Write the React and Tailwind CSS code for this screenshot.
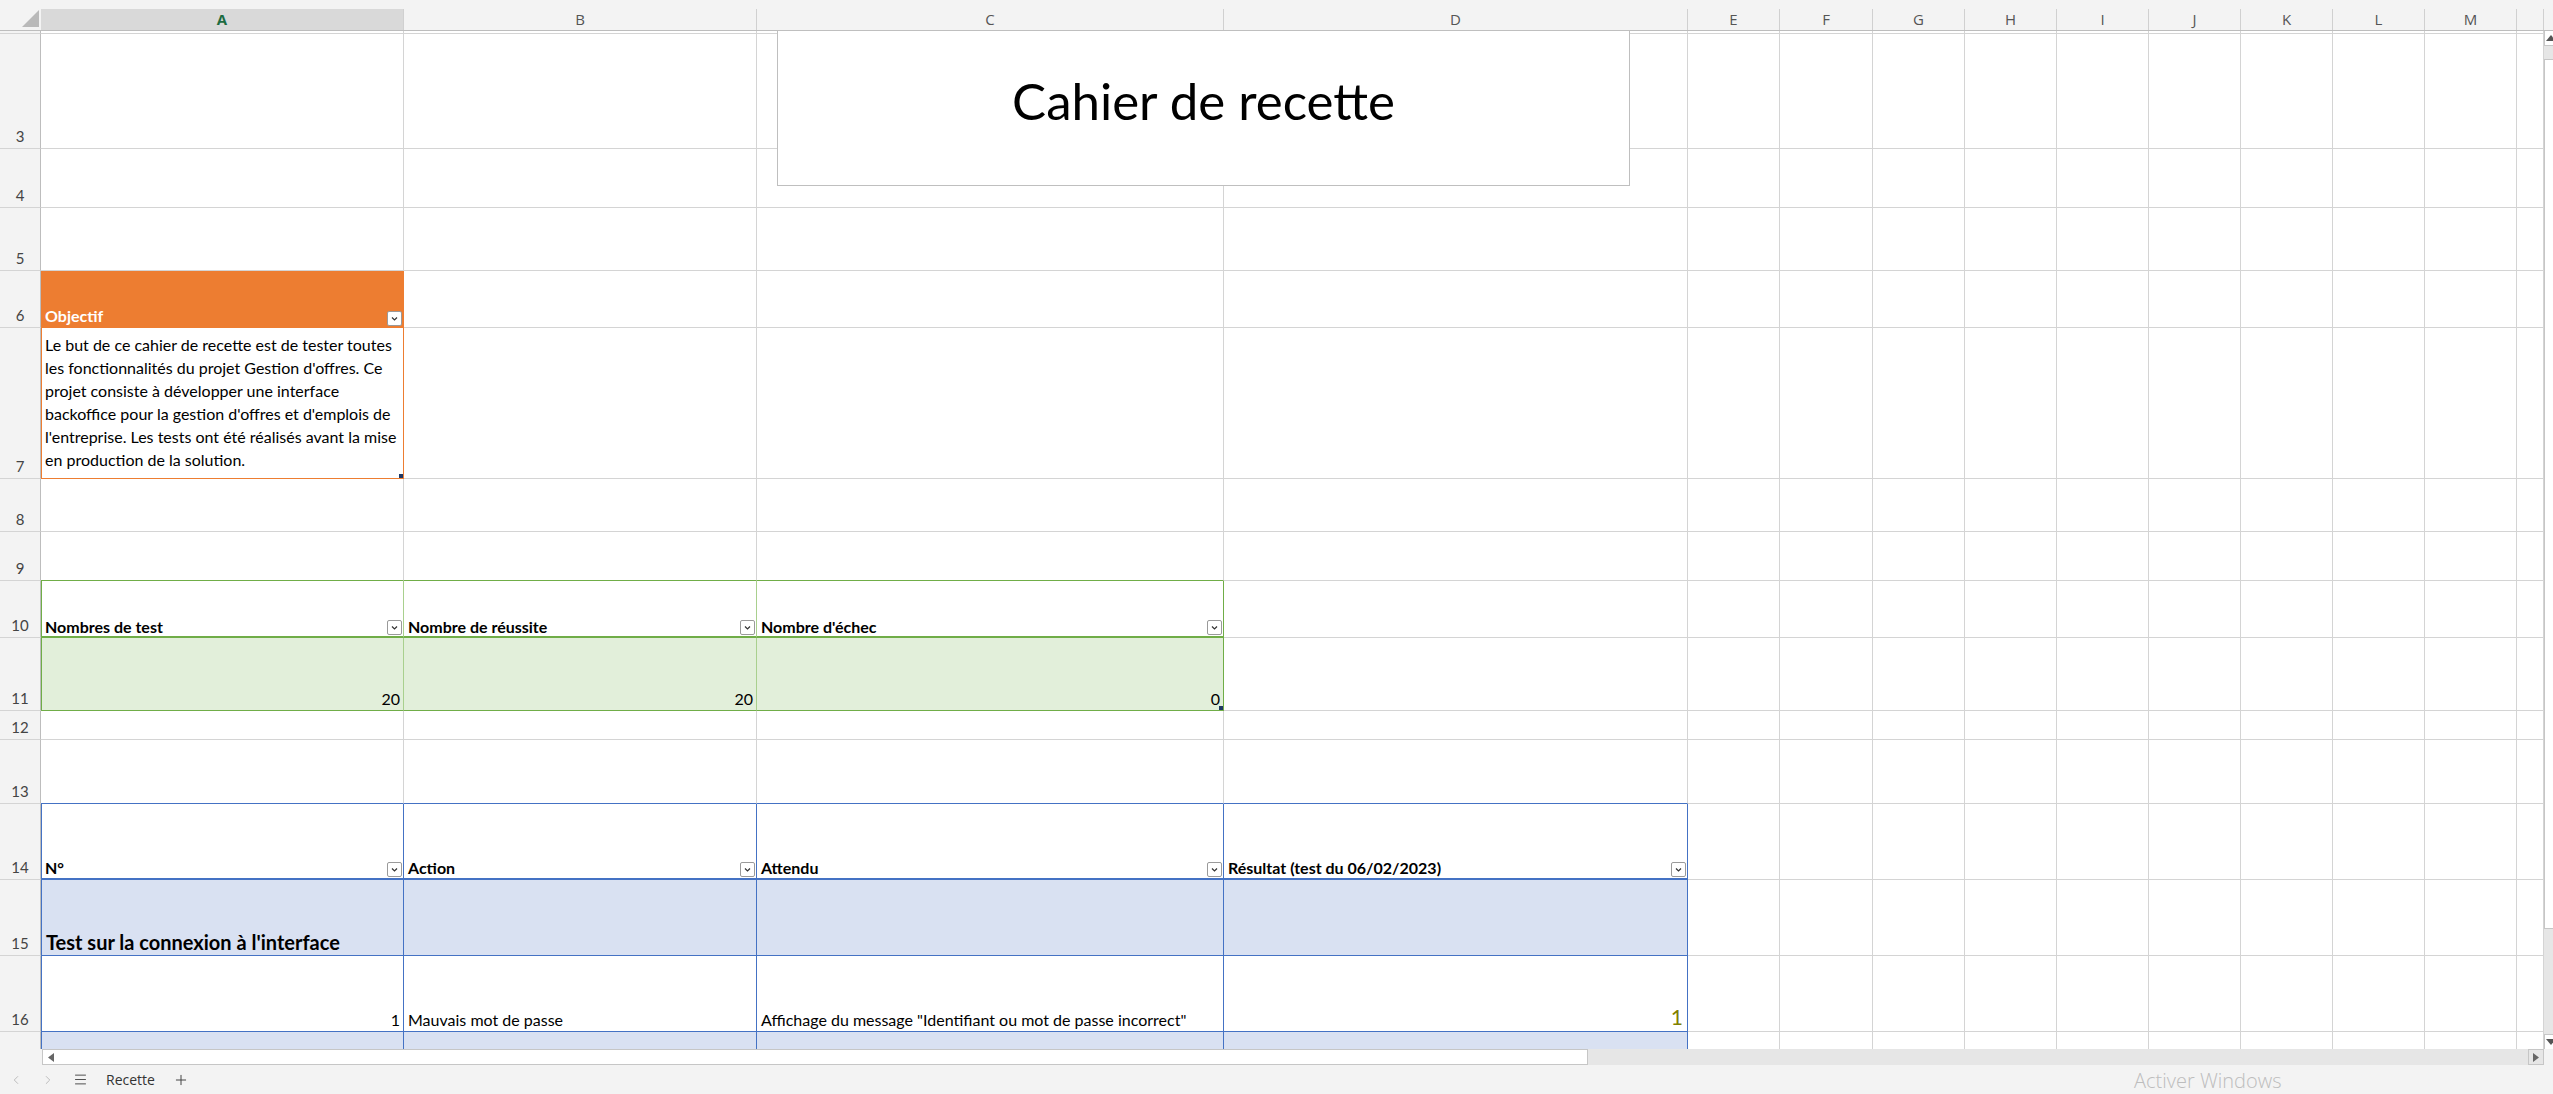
import React from 'react';
import { ChevronLeft, ChevronRight, Menu, Plus } from 'lucide-react';

// largeurs des colonnes visibles
const A = 'w-[363px]';
const B = 'w-[353px]';
const C = 'w-[467px]';
const D = 'w-[464px]';
const EXTRA = [
  { k: 'E', w: 'w-[92px]' },
  { k: 'F', w: 'w-[93px]' },
  { k: 'G', w: 'w-[92px]' },
  { k: 'H', w: 'w-[92px]' },
  { k: 'I', w: 'w-[92px]' },
  { k: 'J', w: 'w-[92px]' },
  { k: 'K', w: 'w-[92px]' },
  { k: 'L', w: 'w-[92px]' },
  { k: 'M', w: 'w-[92px]' },
  { k: '', w: 'w-[27px]' },
];

const GR = 'border-r border-r-[#D4D4D4]';
const GB = 'border-b border-b-[#D4D4D4]';

const cellFont = { fontFamily: 'Lato, "Liberation Sans", sans-serif' };

function Cell({ w, r = GR, b = GB, className = '', children }) {
  return (
    <div className={`relative flex h-full shrink-0 items-end ${w} ${r} ${b} ${className}`}>
      {children}
    </div>
  );
}

function Filter() {
  return (
    <span className="mb-[1px] ml-auto mr-[1px] flex h-[15px] w-[15px] shrink-0 items-center justify-center rounded-[2px] border border-[#9A9A9A] bg-white">
      <svg width="9" height="9" viewBox="0 0 9 9">
        <path d="M2 3.5l2.5 2.5L7 3.5" fill="none" stroke="#333" strokeWidth="1.2" />
      </svg>
    </span>
  );
}

function Handle() {
  return <span className="absolute bottom-0 right-0 h-[4px] w-[4px] bg-[#1F3864]" />;
}

function Row({ h, n, children }) {
  return (
    <div className={`flex shrink-0 ${h}`}>
      <div className="flex h-full w-[41px] shrink-0 items-end justify-center border-r border-b border-r-[#BDBDBD] border-b-[#D4D4D4] bg-[#F3F3F3] pb-[4px] text-[15px] leading-none text-[#444]">
        {n}
      </div>
      {children}
      {EXTRA.map((c, i) => (
        <Cell key={i} w={c.w} />
      ))}
    </div>
  );
}

function Blank() {
  return (
    <>
      <Cell w={A} />
      <Cell w={B} />
      <Cell w={C} />
      <Cell w={D} />
    </>
  );
}

const HEAD = [
  { k: 'A', w: A, sel: true },
  { k: 'B', w: B },
  { k: 'C', w: C },
  { k: 'D', w: D },
  ...EXTRA,
];

export default function App() {
  return (
    <div
      className="relative flex h-[1094px] w-[2553px] flex-col overflow-hidden bg-white"
      style={{ fontFamily: '"Open Sans", "Noto Sans", sans-serif' }}
    >
      {/* en-tête des colonnes */}
      <div className="flex h-[31px] shrink-0 border-b border-b-[#BDBDBD] bg-[#F3F3F3]">
        <div className="relative w-[41px] shrink-0">
          <svg className="absolute left-[22px] top-[10px]" width="17" height="17" viewBox="0 0 17 17">
            <polygon points="17,0 17,17 0,17" fill="#B9B9B9" />
          </svg>
        </div>
        {HEAD.map((c, i) => (
          <div
            key={i}
            className={`mt-[9px] flex h-[21px] shrink-0 items-center justify-center border-r border-r-[#D0D0D0] text-[15px] ${c.w} ${
              c.sel ? 'bg-[#D9D9D9] font-bold text-[#1D6B41]' : 'text-[#555]'
            }`}
          >
            {c.k}
          </div>
        ))}
      </div>

      <div className="flex h-[1018px] shrink-0">
        <div className="flex w-[2544px] shrink-0 flex-col overflow-hidden" style={cellFont}>
          {/* bout de la ligne 2 */}
          <div className="flex h-[3px] shrink-0">
            <div className="h-full w-[41px] shrink-0 border-r border-b border-r-[#BDBDBD] border-b-[#D4D4D4] bg-[#F3F3F3]" />
            <Cell w={A} />
            <Cell w={B} />
            <Cell w={C} />
            <Cell w={D} />
            {EXTRA.map((c, i) => (
              <Cell key={i} w={c.w} />
            ))}
          </div>

          <Row h="h-[115px]" n="3"><Blank /></Row>
          <Row h="h-[59px]" n="4"><Blank /></Row>
          <Row h="h-[63px]" n="5"><Blank /></Row>

          {/* Objectif */}
          <Row h="h-[57px]" n="6">
            <Cell
              w={A}
              r="border-r border-r-[#ED7D31]"
              b="border-b border-b-[#ED7D31]"
              className="border-l border-l-[#ED7D31] bg-[#ED7D31]"
            >
              <span className="pb-[3px] pl-[3px] text-[16px] font-bold leading-none text-white">Objectif</span>
              <Filter />
            </Cell>
            <Cell w={B} />
            <Cell w={C} />
            <Cell w={D} />
          </Row>
          <Row h="h-[151px]" n="7">
            <Cell
              w={A}
              r="border-r border-r-[#ED7D31]"
              b="border-b border-b-[#ED7D31]"
              className="border-l border-l-[#ED7D31]"
            >
              <p className="whitespace-nowrap pb-[7px] pl-[3px] text-[16px] leading-[23px] text-black">
                Le but de ce cahier de recette est de tester toutes
                <br />
                les fonctionnalités du projet Gestion d'offres. Ce
                <br />
                projet consiste à développer une interface
                <br />
                backoffice pour la gestion d'offres et d'emplois de
                <br />
                l'entreprise. Les tests ont été réalisés avant la mise
                <br />
                en production de la solution.
              </p>
              <Handle />
            </Cell>
            <Cell w={B} />
            <Cell w={C} />
            <Cell w={D} />
          </Row>
          <Row h="h-[53px]" n="8"><Blank /></Row>
          <Row h="h-[49px]" n="9">
            <Cell w={A} b="border-b border-b-[#70AD47]" />
            <Cell w={B} b="border-b border-b-[#70AD47]" />
            <Cell w={C} b="border-b border-b-[#70AD47]" />
            <Cell w={D} />
          </Row>

          {/* statistiques */}
          <Row h="h-[57px]" n="10">
            <Cell
              w={A}
              r="border-r border-r-[#A9D08E]"
              b="border-b-2 border-b-[#70AD47]"
              className="border-l border-l-[#70AD47]"
            >
              <span className="pb-[1px] pl-[3px] text-[16px] font-bold leading-none text-black">Nombres de test</span>
              <Filter />
            </Cell>
            <Cell w={B} r="border-r border-r-[#A9D08E]" b="border-b-2 border-b-[#70AD47]">
              <span className="pb-[1px] pl-[4px] text-[16px] font-bold leading-none text-black">Nombre de réussite</span>
              <Filter />
            </Cell>
            <Cell w={C} r="border-r border-r-[#70AD47]" b="border-b-2 border-b-[#70AD47]">
              <span className="pb-[1px] pl-[4px] text-[16px] font-bold leading-none text-black">Nombre d'échec</span>
              <Filter />
            </Cell>
            <Cell w={D} />
          </Row>
          <Row h="h-[73px]" n="11">
            <Cell
              w={A}
              r="border-r border-r-[#A9D08E]"
              b="border-b border-b-[#70AD47]"
              className="justify-end border-l border-l-[#70AD47] bg-[#E2EFDA]"
            >
              <span className="pb-[3px] pr-[3px] text-[16px] leading-none text-black">20</span>
            </Cell>
            <Cell
              w={B}
              r="border-r border-r-[#A9D08E]"
              b="border-b border-b-[#70AD47]"
              className="justify-end bg-[#E2EFDA]"
            >
              <span className="pb-[3px] pr-[3px] text-[16px] leading-none text-black">20</span>
            </Cell>
            <Cell
              w={C}
              r="border-r border-r-[#70AD47]"
              b="border-b border-b-[#70AD47]"
              className="justify-end bg-[#E2EFDA]"
            >
              <span className="pb-[3px] pr-[3px] text-[16px] leading-none text-black">0</span>
              <Handle />
            </Cell>
            <Cell w={D} />
          </Row>
          <Row h="h-[29px]" n="12"><Blank /></Row>
          <Row h="h-[64px]" n="13">
            <Cell w={A} b="border-b border-b-[#4472C4]" />
            <Cell w={B} b="border-b border-b-[#4472C4]" />
            <Cell w={C} b="border-b border-b-[#4472C4]" />
            <Cell w={D} b="border-b border-b-[#4472C4]" />
          </Row>

          {/* tableau des tests */}
          <Row h="h-[76px]" n="14">
            <Cell
              w={A}
              r="border-r border-r-[#4472C4]"
              b="border-b-2 border-b-[#4472C4]"
              className="border-l border-l-[#4472C4]"
            >
              <span className="pb-[2px] pl-[3px] text-[16px] font-bold leading-none text-black">N°</span>
              <Filter />
            </Cell>
            <Cell w={B} r="border-r border-r-[#4472C4]" b="border-b-2 border-b-[#4472C4]">
              <span className="pb-[2px] pl-[4px] text-[16px] font-bold leading-none text-black">Action</span>
              <Filter />
            </Cell>
            <Cell w={C} r="border-r border-r-[#4472C4]" b="border-b-2 border-b-[#4472C4]">
              <span className="pb-[2px] pl-[4px] text-[16px] font-bold leading-none text-black">Attendu</span>
              <Filter />
            </Cell>
            <Cell w={D} r="border-r border-r-[#4472C4]" b="border-b-2 border-b-[#4472C4]">
              <span className="pb-[2px] pl-[4px] text-[16px] font-bold leading-none text-black">
                Résultat (test du 06/02/2023)
              </span>
              <Filter />
            </Cell>
          </Row>
          <Row h="h-[76px]" n="15">
            <Cell
              w={A}
              r="border-r border-r-[#4472C4]"
              b="border-b border-b-[#4472C4]"
              className="border-l border-l-[#4472C4] bg-[#D9E1F2]"
            >
              <span className="whitespace-nowrap pb-[3px] pl-[4px] text-[20px] font-bold leading-none text-black">
                Test sur la connexion à l'interface
              </span>
            </Cell>
            <Cell w={B} r="border-r border-r-[#4472C4]" b="border-b border-b-[#4472C4]" className="bg-[#D9E1F2]" />
            <Cell w={C} r="border-r border-r-[#4472C4]" b="border-b border-b-[#4472C4]" className="bg-[#D9E1F2]" />
            <Cell w={D} r="border-r border-r-[#4472C4]" b="border-b border-b-[#4472C4]" className="bg-[#D9E1F2]" />
          </Row>
          <Row h="h-[76px]" n="16">
            <Cell
              w={A}
              r="border-r border-r-[#4472C4]"
              b="border-b border-b-[#4472C4]"
              className="justify-end border-l border-l-[#4472C4]"
            >
              <span className="pb-[3px] pr-[3px] text-[16px] leading-none text-black">1</span>
            </Cell>
            <Cell w={B} r="border-r border-r-[#4472C4]" b="border-b border-b-[#4472C4]">
              <span className="pb-[3px] pl-[4px] text-[16px] leading-none text-black">Mauvais mot de passe</span>
            </Cell>
            <Cell w={C} r="border-r border-r-[#4472C4]" b="border-b border-b-[#4472C4]">
              <span className="whitespace-nowrap pb-[3px] pl-[4px] text-[16px] leading-none text-black">
                Affichage du message "Identifiant ou mot de passe incorrect"
              </span>
            </Cell>
            <Cell w={D} r="border-r border-r-[#4472C4]" b="border-b border-b-[#4472C4]" className="justify-end">
              <span className="pb-[4px] pr-[4px] text-[21px] leading-none text-[#808000]">1</span>
            </Cell>
          </Row>
          {/* ligne 17 coupée par le bas de la fenêtre, son numéro n'est pas visible */}
          <Row h="h-[76px]" n="">
            <Cell
              w={A}
              r="border-r border-r-[#4472C4]"
              b="border-b border-b-[#4472C4]"
              className="border-l border-l-[#4472C4] bg-[#D9E1F2]"
            />
            <Cell w={B} r="border-r border-r-[#4472C4]" b="border-b border-b-[#4472C4]" className="bg-[#D9E1F2]" />
            <Cell w={C} r="border-r border-r-[#4472C4]" b="border-b border-b-[#4472C4]" className="bg-[#D9E1F2]" />
            <Cell w={D} r="border-r border-r-[#4472C4]" b="border-b border-b-[#4472C4]" className="bg-[#D9E1F2]" />
          </Row>
        </div>

        {/* barre de défilement verticale */}
        <div className="flex w-[9px] shrink-0 flex-col bg-[#E6E6E6]">
          <div className="relative h-[15px] shrink-0 overflow-hidden border-l border-b border-[#C6C6C6] bg-white">
            <svg className="absolute left-[1px] top-[4px]" width="10" height="6" viewBox="0 0 10 6">
              <polygon points="5,0 10,6 0,6" fill="#555" />
            </svg>
          </div>
          <div className="h-[13px] shrink-0" />
          <div className="h-[870px] shrink-0 border-l border-y border-[#C6C6C6] bg-white" />
          <div className="flex-1" />
          <div className="relative h-[15px] shrink-0 overflow-hidden border-l border-t border-[#C6C6C6] bg-white">
            <svg className="absolute left-[1px] top-[4px]" width="10" height="6" viewBox="0 0 10 6">
              <polygon points="0,0 10,0 5,6" fill="#555" />
            </svg>
          </div>
        </div>
      </div>

      {/* barre de défilement horizontale */}
      <div className="flex h-[16px] shrink-0 bg-[#F3F3F3]">
        <div className="w-[42px] shrink-0" />
        <div className="flex w-[1546px] shrink-0 items-center border border-[#C6C6C6] bg-white">
          <svg className="ml-[5px]" width="6" height="9" viewBox="0 0 6 9">
            <polygon points="6,0 6,9 0,4.5" fill="#666" />
          </svg>
        </div>
        <div className="flex-1 bg-[#E6E6E6]" />
        <div className="flex w-[16px] shrink-0 items-center justify-center border border-[#C6C6C6] bg-[#E6E6E6]">
          <svg width="6" height="9" viewBox="0 0 6 9">
            <polygon points="0,0 0,9 6,4.5" fill="#666" />
          </svg>
        </div>
        <div className="w-[9px] shrink-0" />
      </div>

      {/* onglets */}
      <div className="relative flex h-[29px] shrink-0 items-center bg-[#F3F3F3] text-[#333]">
        <span className="flex w-[32px] justify-center text-[#B5B5B5]">
          <ChevronLeft size={14} strokeWidth={1.5} />
        </span>
        <span className="flex w-[32px] justify-center text-[#B5B5B5]">
          <ChevronRight size={14} strokeWidth={1.5} />
        </span>
        <span className="flex w-[32px] justify-center text-[#444]">
          <Menu size={15} strokeWidth={1.5} />
        </span>
        <span className="ml-[10px] text-[14px]">Recette</span>
        <span className="ml-[18px] flex w-[16px] justify-center text-[#444]">
          <Plus size={16} strokeWidth={1.5} />
        </span>
        <span className="absolute left-[2134px] top-[1px] text-[20px] font-light text-[#BDBDBD]">Activer Windows</span>
      </div>

      {/* titre flottant */}
      <div className="absolute left-[777px] top-[30px] z-10 flex h-[156px] w-[853px] items-center justify-center border border-[#BFBFBF] bg-white">
        <span className="mt-[-14px] text-[51px] text-black" style={cellFont}>
          Cahier de recette
        </span>
      </div>
    </div>
  );
}
